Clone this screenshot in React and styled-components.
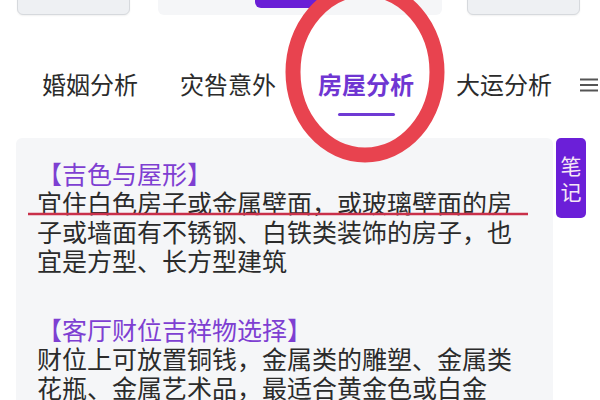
import styled, { createGlobalStyle } from "styled-components";

const GlobalStyle = createGlobalStyle`
  html, body {
    margin: 0;
    padding: 0;
    background: #ffffff;
    overflow: hidden;
  }
  body {
    font-family: "Noto Sans CJK SC", "Noto Sans", sans-serif;
    color: #333333;
  }
`;

const tabs = ["事业分析", "婚姻分析", "灾咎意外", "房屋分析", "大运分析"];

const sections = [
  {
    title: "【吉色与屋形】",
    text: "宜住白色房子或金属壁面，或玻璃壁面的房子或墙面有不锈钢、白铁类装饰的房子，也宜是方型、长方型建筑",
  },
  {
    title: "【客厅财位吉祥物选择】",
    text: "财位上可放置铜钱，金属类的雕塑、金属类花瓶、金属艺术品，最适合黄金色或白金色，可增强家中的财运。",
  },
];

export default function App() {
  return (
    <>
      <GlobalStyle />
      <Page>
        <TopBar>
          <GhostButton />
          <Segment>
            <SegmentActive />
          </Segment>
          <GhostButton />
        </TopBar>

        <TabWrap>
          <TabTrack>
            {tabs.map((tab) => (
              <Tab key={tab}>
                <TabLabel $active={tab === "房屋分析"}>{tab}</TabLabel>
                <TabLine $active={tab === "房屋分析"} />
              </Tab>
            ))}
            <MenuIcon viewBox="0 0 18 14">
              <line x1="0" y1="1.5" x2="18" y2="1.5" />
              <line x1="0" y1="7" x2="18" y2="7" />
              <line x1="0" y1="12.5" x2="18" y2="12.5" />
            </MenuIcon>
          </TabTrack>
        </TabWrap>

        <Content>
          <Card>
            {sections.map((section) => (
              <Section key={section.title}>
                <SectionTitle>{section.title}</SectionTitle>
                <SectionText>{section.text}</SectionText>
              </Section>
            ))}
          </Card>
          <NoteButton>
            <span>笔</span>
            <span>记</span>
          </NoteButton>
        </Content>

        <Annotation viewBox="0 0 600 400">
          <ellipse
            cx="365"
            cy="72"
            rx="72"
            ry="83"
            fill="none"
            stroke="#e8434f"
            strokeWidth="15"
          />
          <line
            x1="28"
            y1="214"
            x2="528"
            y2="214"
            stroke="#c9304a"
            strokeWidth="2.5"
          />
        </Annotation>
      </Page>
    </>
  );
}

const Page = styled.div`
  position: relative;
  width: 600px;
  height: 400px;
  overflow: hidden;
`;

const TopBar = styled.div`
  display: flex;
  align-items: flex-start;
  gap: 28px;
  margin-top: -30px;
  padding-left: 17px;
  height: 45px;
`;

const GhostButton = styled.div`
  width: 113px;
  height: 45px;
  box-sizing: border-box;
  background: #eef0f3;
  border: 1px solid #d6d9dd;
  border-radius: 6px;
  box-shadow: 0 1px 2px rgba(0, 0, 0, 0.06);

  &:last-child {
    margin-left: -3px;
  }
`;

const Segment = styled.div`
  display: flex;
  width: 284px;
  height: 45px;
  padding-left: 97px;
  box-sizing: border-box;
  background: #f5f6f8;
  border-radius: 6px;
`;

const SegmentActive = styled.div`
  width: 66px;
  height: 38px;
  background: #6a1fd6;
  border-radius: 6px;
`;

const TabWrap = styled.div`
  margin-top: 53px;
  overflow: hidden;
`;

const TabTrack = styled.div`
  display: flex;
  align-items: flex-start;
  gap: 42px;
  margin-left: -96px;
`;

const Tab = styled.div`
  display: flex;
  flex-direction: column;
  align-items: center;
  gap: 13px;
  flex-shrink: 0;
`;

const TabLabel = styled.span`
  font-size: 24px;
  line-height: 32px;
  white-space: nowrap;
  color: ${(p) => (p.$active ? "#6f36d2" : "#2b2b2b")};
  font-weight: ${(p) => (p.$active ? 700 : 400)};
`;

const TabLine = styled.span`
  display: block;
  width: 57px;
  height: 3px;
  border-radius: 2px;
  background: ${(p) => (p.$active ? "#6f3ad4" : "transparent")};
`;

const MenuIcon = styled.svg`
  flex-shrink: 0;
  width: 18px;
  height: 14px;
  margin-left: -14px;
  margin-top: 10px;
  stroke: #555555;
  stroke-width: 2;
`;

const Content = styled.div`
  display: flex;
  align-items: flex-start;
  gap: 3px;
  margin-top: 22px;
  padding-left: 16px;
`;

const Card = styled.div`
  width: 537px;
  box-sizing: border-box;
  min-height: 300px;
  padding: 21px 36px 20px 21px;
  background: #f5f6f8;
  border-radius: 6px;
`;

const Section = styled.div`
  font-size: 25px;
  line-height: 29px;

  & + & {
    margin-top: 40px;
  }
`;

const SectionTitle = styled.div`
  color: #7e3fd2;
`;

const SectionText = styled.div`
  color: #2b2b2b;
`;

const NoteButton = styled.div`
  display: flex;
  flex-direction: column;
  align-items: center;
  justify-content: center;
  width: 30px;
  height: 80px;
  background: #6b1fd8;
  border-radius: 5px;
  color: #f6e8f6;
  font-size: 21px;
  line-height: 26px;
`;

const Annotation = styled.svg`
  position: absolute;
  top: 0;
  left: 0;
  width: 600px;
  height: 400px;
  pointer-events: none;
`;
